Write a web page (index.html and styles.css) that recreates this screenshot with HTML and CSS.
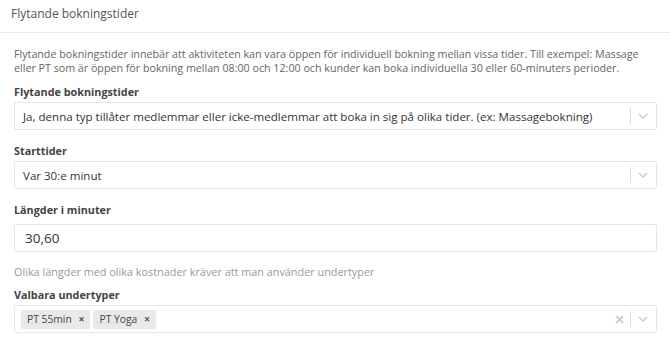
FILE: index.html
```html
<!DOCTYPE html>
<html lang="sv">
<head>
<meta charset="utf-8">
<link rel="stylesheet" href="styles.css">
</head>
<body>
<div class="panel">
  <div class="panel-head">Flytande bokningstider</div>
  <div class="panel-body">
    <p class="intro">Flytande bokningstider innebär att aktiviteten kan vara öppen för individuell bokning mellan vissa tider. Till exempel: Massage eller PT som är öppen för bokning mellan 08:00 och 12:00 och kunder kan boka individuella 30 eller 60-minuters perioder.</p>

    <label class="field-label">Flytande bokningstider</label>
    <div class="select">
      <span class="select-value">Ja, denna typ tillåter medlemmar eller icke-medlemmar att boka in sig på olika tider. (ex: Massagebokning)</span>
      <span class="select-sep"></span>
      <svg class="chev" width="10" height="6" viewBox="0 0 10 6"><path d="M1 1l4 4 4-4" fill="none" stroke="#c4c4c4" stroke-width="1.2"/></svg>
    </div>

    <label class="field-label">Starttider</label>
    <div class="select">
      <span class="select-value">Var 30:e minut</span>
      <span class="select-sep"></span>
      <svg class="chev" width="10" height="6" viewBox="0 0 10 6"><path d="M1 1l4 4 4-4" fill="none" stroke="#c4c4c4" stroke-width="1.2"/></svg>
    </div>

    <label class="field-label">Längder i minuter</label>
    <div class="input">30,60</div>

    <p class="help">Olika längder med olika kostnader kräver att man använder undertyper</p>

    <label class="field-label">Valbara undertyper</label>
    <div class="select multi">
      <div class="tags">
        <span class="tag">PT 55min <span class="tag-x">×</span></span>
        <span class="tag">PT Yoga <span class="tag-x">×</span></span>
      </div>
      <svg class="clear" width="9" height="9" viewBox="0 0 9 9"><path d="M1 1l7 7M8 1l-7 7" stroke="#c4c4c4" stroke-width="1.6"/></svg>
      <span class="select-sep"></span>
      <svg class="chev" width="10" height="6" viewBox="0 0 10 6"><path d="M1 1l4 4 4-4" fill="none" stroke="#c4c4c4" stroke-width="1.2"/></svg>
    </div>
  </div>
</div>
</body>
</html>
```
FILE: styles.css
```css
* { box-sizing: border-box; }
html, body { margin: 0; padding: 0; background: #fff; }
body {
  font-family: "Open Sans", "Noto Sans", sans-serif;
  color: #555;
  width: 670px;
}
.panel-head {
  font-size: 12px;
  line-height: 18px;
  padding: 5px 11px 9px;
  color: #555;
  border-bottom: 1px solid #eaeaea;
}
.panel-body {
  padding: 14px 13px 12px 14px;
  display: flex;
  flex-direction: column;
}
.intro {
  margin: 0;
  font-size: 10.7px;
  line-height: 14px;
  color: #666;
}
.field-label {
  display: block;
  font-size: 10.8px;
  line-height: 14px;
  font-weight: 700;
  color: #444;
  margin: 10px 0 3px;
}
.intro + .field-label { margin-top: 10px; }
.select + .field-label { margin-top: 14px; }
.select, .input {
  height: 28px;
  border: 1px solid #e6e6e6;
  border-radius: 2px;
  display: flex;
  align-items: center;
  background: #fff;
}
.select-value {
  flex: 1;
  padding-left: 8px;
  font-size: 11.55px;
  color: #333;
  white-space: nowrap;
  overflow: hidden;
}
.select-sep {
  width: 1px;
  height: 16px;
  background: #dcdcdc;
  margin: 0 7px 0 0;
}
.chev { margin-right: 8px; }
.input {
  margin-top: 4px;
  padding-left: 10px;
  font-size: 13.5px;
  color: #333;
}
.help {
  margin: 13px 0 0;
  font-size: 10.85px;
  line-height: 14px;
  color: #999;
}
.help + .field-label { margin-top: 9px; }
.tags {
  flex: 1;
  display: flex;
  gap: 3px;
  padding-left: 6px;
}
.tag {
  background: #e9e9e9;
  border-radius: 2px;
  font-size: 10.3px;
  line-height: 19px;
  padding: 0 6px 0 6px;
  color: #444;
}
.tag-x {
  margin-left: 4px;
  color: #555;
  font-size: 10.5px;
  font-weight: 700;
}
.clear { margin-right: 6px; }
```
